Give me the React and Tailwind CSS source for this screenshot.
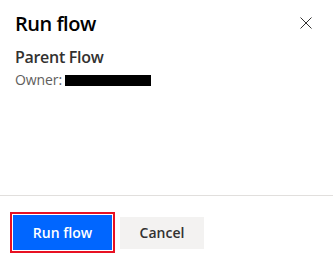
export default function App() {
  return (
    <div
      className="w-[333px] h-[260px] bg-white flex flex-col overflow-hidden"
      style={{ fontFamily: '"Open Sans", "Noto Sans", sans-serif' }}
    >
      <div className="flex-1 pl-[15px] pr-[20px] pt-[10px]">
        <div className="flex items-start justify-between">
          <h1 className="text-[20px] leading-[28px] font-semibold text-[#000] tracking-[-0.5px]">Run flow</h1>
          <button className="mt-[7px] mr-[1px] w-[12px] h-[12px] flex items-center justify-center">
            <svg width="12" height="12" viewBox="0 0 12 12" fill="none">
              <path d="M0.5 0.5 L11.5 11.5 M11.5 0.5 L0.5 11.5" stroke="#323130" strokeWidth="1" />
            </svg>
          </button>
        </div>
        <div className="mt-[8px] text-[16px] leading-[22px] font-semibold text-[#323130] tracking-[-0.3px]">Parent Flow</div>
        <div className="mt-[2px] flex items-center text-[14px] leading-[20px] text-[#605e5c]">
          <span className="tracking-[-0.1px]">Owner:</span>
          <span className="ml-[3px] inline-block w-[86px] h-[11px] bg-black"></span>
        </div>
      </div>
      <div className="h-px bg-[#e1dfdd]"></div>
      <div className="flex items-center gap-[5px] pl-[10px] pt-[16px] pb-[7px]">
        <div className="border-2 border-[#e81123] p-px">
          <button className="w-[99px] h-[35px] bg-[#0066ff] text-white text-[14px] font-semibold">Run flow</button>
        </div>
        <button className="w-[84px] h-[32px] bg-[#f3f2f1] text-[#323130] text-[14px] font-semibold">Cancel</button>
      </div>
    </div>
  );
}
